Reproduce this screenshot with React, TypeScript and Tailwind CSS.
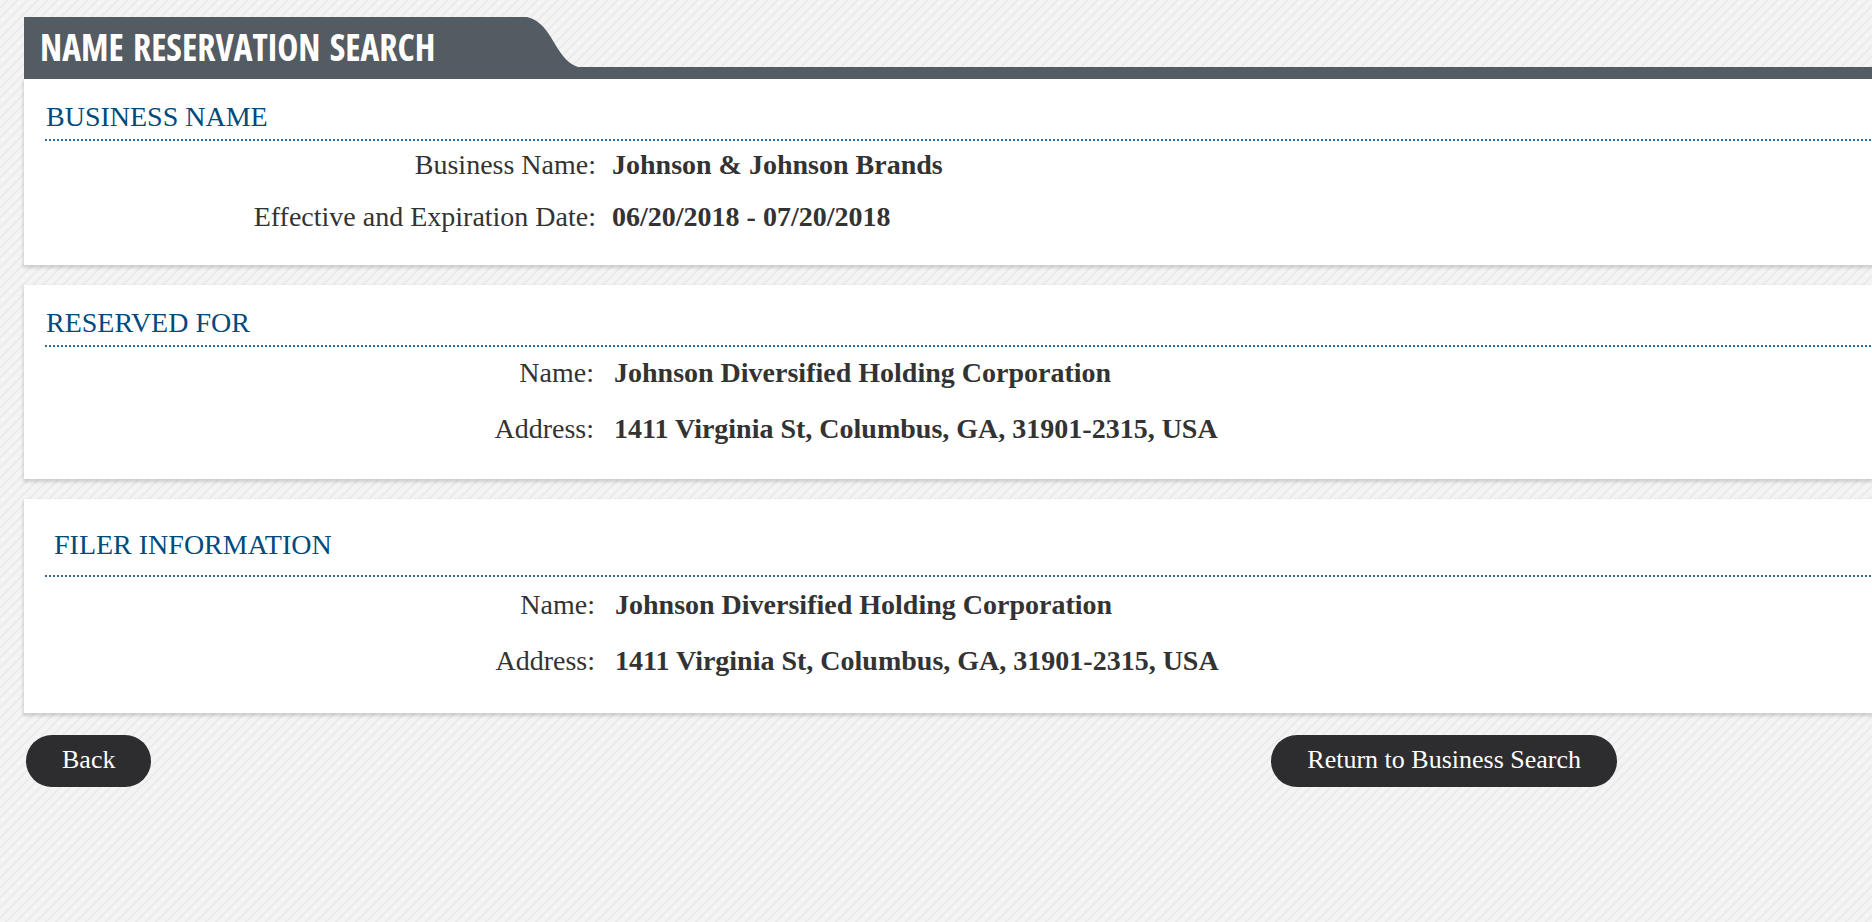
type Field = { label: string; value: string };

const holder: Field[] = [
  { label: "Name:", value: "Johnson Diversified Holding Corporation" },
  { label: "Address:", value: "1411 Virginia St, Columbus, GA, 31901-2315, USA" },
];

const reservation: Field[] = [
  { label: "Business Name:", value: "Johnson & Johnson Brands" },
  { label: "Effective and Expiration Date:", value: "06/20/2018 - 07/20/2018" },
];

function Rule() {
  return <div className="h-[2px] bg-[repeating-linear-gradient(90deg,#356b98_0px,#356b98_2px,#ffffff_2px,#ffffff_4px)]" />;
}

function Fields({ items, className, labelClass }: { items: Field[]; className: string; labelClass: string }) {
  return (
    <dl className={`flex flex-col text-[28px] leading-8 text-[#333333] ${className}`}>
      {items.map((f) => (
        <div key={f.label} className="flex whitespace-nowrap">
          <dt className={`shrink-0 text-right ${labelClass}`}>{f.label}</dt>
          <dd className="font-bold">{f.value}</dd>
        </div>
      ))}
    </dl>
  );
}

const panel = "bg-white pl-[21px] shadow-[0_2px_3px_1px_rgba(0,0,0,0.15)]";
const heading = "text-[28px] leading-8 text-[#004a7c]";
const button = "h-[52px] rounded-full bg-[#2d2d2f] px-9 pb-[3px] text-[26px] leading-none text-white whitespace-nowrap";

export default function App() {
  return (
    <div className="h-[922px] w-full overflow-hidden bg-[#f3f3f3] bg-[repeating-linear-gradient(135deg,#f4f4f4_0px,#f4f4f4_4px,#eaeaea_5.2px,#eaeaea_5.8px,#f4f4f4_7.071px)] pt-[17px] pl-6 font-['Liberation_Serif','Times_New_Roman',serif]">
      <header className="relative z-10 flex h-[62px] items-start">
        <div className="h-full w-[503px] bg-[#535b63] pl-4">
          <h1 className="w-max origin-left scale-x-[0.963] text-[37px] leading-[60px] font-bold whitespace-nowrap text-white [word-spacing:3px] font-['Open_Sans',sans-serif] [font-stretch:75%]">
            NAME RESERVATION SEARCH
          </h1>
        </div>
        <svg className="h-full w-[54px] shrink-0" viewBox="0 0 54 62" fill="#535b63">
          <path d="M0 0C26 6 28 43 51 50H54V62H0Z" />
        </svg>
        <div className="h-3 grow self-end bg-[#535b63]" />
      </header>

      <section className={`${panel} h-[186px] pt-[22px]`}>
        <h2 className={`${heading} mb-1.5 pl-px`}>BUSINESS NAME</h2>
        <Rule />
        <Fields items={reservation} className="mt-2 gap-5" labelClass="w-[551px] mr-4" />
      </section>

      <section className={`${panel} mt-5 h-[194px] pt-[22px]`}>
        <h2 className={`${heading} mb-1.5 pl-px`}>RESERVED FOR</h2>
        <Rule />
        <Fields items={holder} className="mt-2.5 gap-6" labelClass="w-[549px] mr-5" />
      </section>

      <section className={`${panel} mt-5 h-[214px] pt-[30px]`}>
        <h2 className={`${heading} mb-3.5 pl-[9px]`}>FILER INFORMATION</h2>
        <Rule />
        <Fields items={holder} className="mt-3 gap-6" labelClass="w-[550px] mr-5" />
      </section>

      <footer className="mt-[22px] ml-0.5 flex w-[1591px] justify-between">
        <button className={button}>Back</button>
        <button className={button}>Return to Business Search</button>
      </footer>
    </div>
  );
}
